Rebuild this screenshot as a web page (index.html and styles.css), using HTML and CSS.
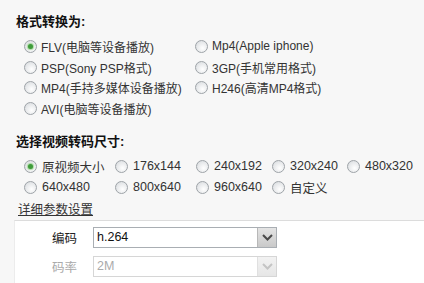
FILE: index.html
```html
<!DOCTYPE html>
<html lang="zh-CN">
<head>
<meta charset="UTF-8" />
<title>视频转换</title>
<link rel="stylesheet" href="styles.css">
</head>
<body>
<div class="page">

  <!-- 格式 -->
  <section class="group">
    <h3 class="group-title">格式转换为:</h3>
    <div class="options format-opts">
      <label class="opt"><input type="radio" name="fmt" checked><span>FLV(电脑等设备播放)</span></label>
      <label class="opt"><input type="radio" name="fmt"><span>Mp4(Apple iphone)</span></label>
      <label class="opt"><input type="radio" name="fmt"><span>PSP(Sony PSP格式)</span></label>
      <label class="opt"><input type="radio" name="fmt"><span>3GP(手机常用格式)</span></label>
      <label class="opt"><input type="radio" name="fmt"><span>MP4(手持多媒体设备播放)</span></label>
      <label class="opt"><input type="radio" name="fmt"><span>H246(高清MP4格式)</span></label>
      <label class="opt"><input type="radio" name="fmt"><span>AVI(电脑等设备播放)</span></label>
    </div>
  </section>

  <!-- 尺寸 -->
  <section class="group">
    <h3 class="group-title">选择视频转码尺寸:</h3>
    <div class="options size-opts">
      <label class="opt"><input type="radio" name="size" checked><span>原视频大小</span></label>
      <label class="opt"><input type="radio" name="size"><span>176x144</span></label>
      <label class="opt"><input type="radio" name="size"><span>240x192</span></label>
      <label class="opt"><input type="radio" name="size"><span>320x240</span></label>
      <label class="opt"><input type="radio" name="size"><span>480x320</span></label>
      <label class="opt"><input type="radio" name="size"><span>640x480</span></label>
      <label class="opt"><input type="radio" name="size"><span>800x640</span></label>
      <label class="opt"><input type="radio" name="size"><span>960x640</span></label>
      <label class="opt"><input type="radio" name="size"><span>自定义</span></label>
    </div>
  </section>

  <a class="detail-link" href="#">详细参数设置</a>

  <!-- 详细参数 -->
  <div class="panel">
    <div class="field">
      <span class="field-label">编码</span>
      <div class="select">
        <span class="select-value">h.264</span>
        <span class="select-arrow"><svg width="11" height="7" viewBox="0 0 11 7"><path d="M1 1l4.5 4.5L10 1" fill="none" stroke="#4a4a4a" stroke-width="2"/></svg></span>
      </div>
    </div>
    <div class="field disabled">
      <span class="field-label">码率</span>
      <div class="select">
        <span class="select-value">2M</span>
        <span class="select-arrow"><svg width="11" height="7" viewBox="0 0 11 7"><path d="M1 1l4.5 4.5L10 1" fill="none" stroke="#c4c4c4" stroke-width="2"/></svg></span>
      </div>
    </div>
  </div>

</div>
</body>
</html>
```

FILE: styles.css
```css
* {
  box-sizing: border-box;
}
body {
  margin: 0;
  font-family: "Liberation Sans", "Noto Sans CJK SC", sans-serif;
  font-size: 12px;
  color: #222;
  background: #f7f7f7;
}

.page {
  width: 424px;
  height: 283px;
  overflow: hidden;
  padding-top: 14px;
}

/* Groups */
.group-title {
  margin: 0;
  padding-left: 16px;
  font-size: 13px;
  line-height: 16px;
  font-weight: 700;
  color: #111;
}
.group + .group .group-title {
  margin-top: 15px;
}

.options {
  display: grid;
  padding-left: 24px;
  margin-top: 6px;
}
.format-opts {
  grid-template-columns: 171px auto;
  grid-auto-rows: 20.7px;
}
.size-opts {
  grid-template-columns: 91px 81px 76px 75px auto;
  grid-auto-rows: 21px;
}

.opt {
  display: flex;
  align-items: center;
  gap: 4px;
  white-space: nowrap;
  color: #333;
}
.size-opts .opt {
  gap: 5px;
  font-size: 12.5px;
}

/* Radio */
.opt input {
  appearance: none;
  -webkit-appearance: none;
  margin: 0;
  width: 13px;
  height: 13px;
  border-radius: 50%;
  border: 1px solid #9ea3a8;
  background: radial-gradient(circle at 60% 65%, #ffffff 0, #e6e8ea 60%, #d0d4d8 100%);
  flex: none;
  position: relative;
}
.opt input:checked::after {
  content: "";
  position: absolute;
  left: 3px;
  top: 3px;
  width: 5px;
  height: 5px;
  border-radius: 50%;
  background: #3f9b3a;
  box-shadow: 0 0 1px 1px #a8d8a0;
}

/* Link */
.detail-link {
  display: inline-block;
  margin: 5px 0 0 18px;
  line-height: 14px;
  font-size: 12.5px;
  color: #333;
  text-decoration: underline;
  text-underline-offset: 1px;
}

/* Panel */
.panel {
  margin: 3px 0 0 14px;
  background: #fff;
  border-top: 1px solid #dcdcdc;
  border-left: 1px solid #ececec;
  padding-top: 6px;
  display: flex;
  flex-direction: column;
  gap: 8px;
  height: 80px;
}
.field {
  display: flex;
  align-items: center;
  gap: 16px;
}
.field-label {
  width: 62px;
  text-align: right;
  font-size: 12.5px;
  color: #222;
}
.select {
  display: flex;
  width: 184px;
  height: 21px;
  border: 1px solid #a9aeb3;
  background: #fff;
}
.select-value {
  flex: 1;
  padding-left: 3px;
  line-height: 19px;
  font-size: 12.5px;
  color: #111;
}
.select-arrow {
  width: 19px;
  display: flex;
  align-items: center;
  justify-content: center;
  background: linear-gradient(#e4e4e4, #c9c9c9);
  border-left: 1px solid #b8b8b8;
}

.field.disabled .field-label,
.field.disabled .select-value {
  color: #aaa;
}
.field.disabled .select {
  border-color: #d6d6d6;
}
.field.disabled .select-arrow {
  background: linear-gradient(#f2f2f2, #e6e6e6);
  border-left-color: #e0e0e0;
}
```
